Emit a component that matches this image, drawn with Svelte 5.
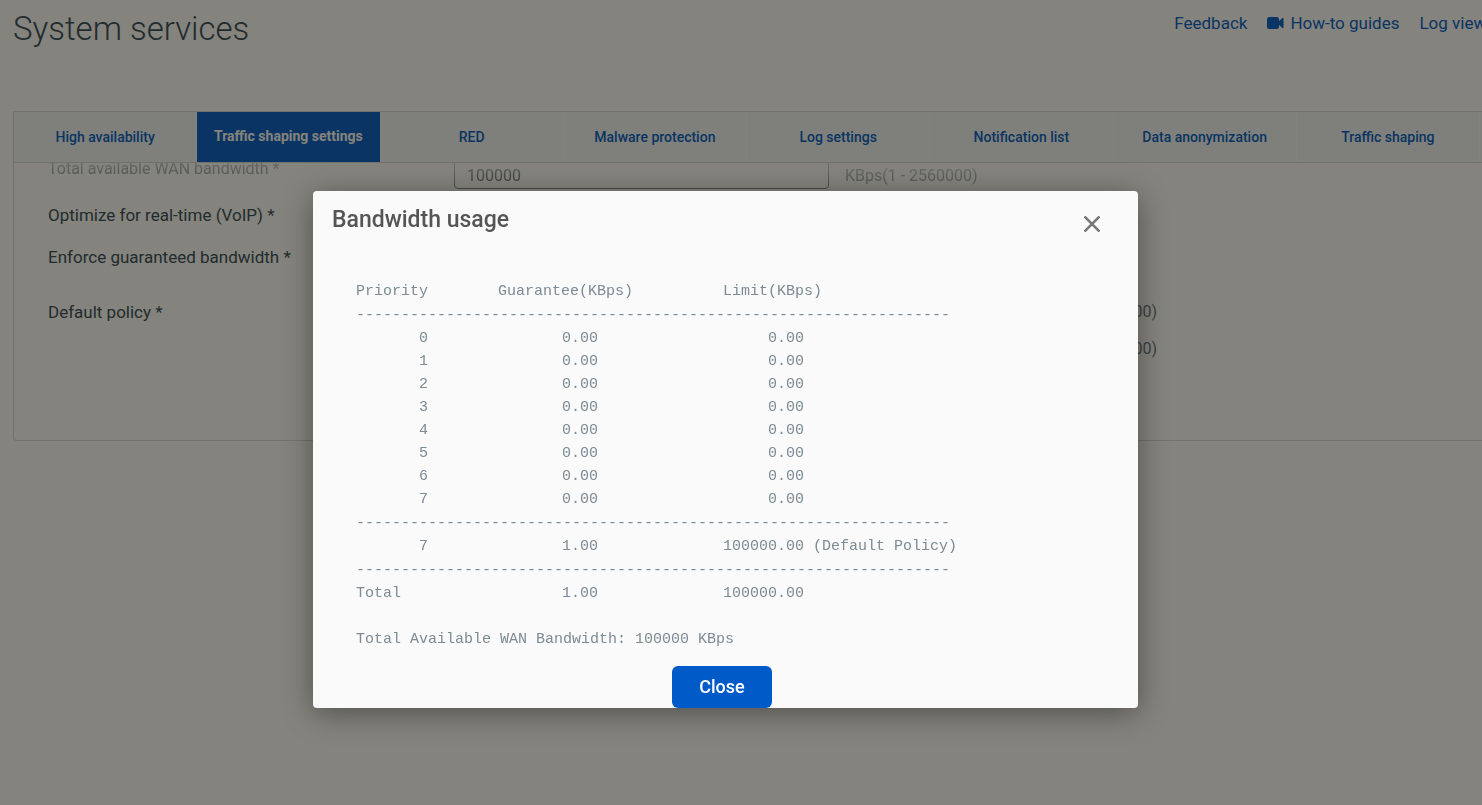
<script>
  const tabs = [
    'High availability',
    'Traffic shaping settings',
    'RED',
    'Malware protection',
    'Log settings',
    'Notification list',
    'Data anonymization',
    'Traffic shaping'
  ];
  let active = $state('Traffic shaping settings');
  let open = $state(true);
  let bandwidth = $state('100000');

  const rows = [0, 1, 2, 3, 4, 5, 6, 7].map((priority) => ({
    priority,
    guarantee: '0.00',
    limit: '0.00'
  }));
  const rule = '-'.repeat(66);
</script>

<div class="page">
  <header>
    <h1>System services</h1>
    <nav class="links">
      <a href="#feedback">Feedback</a>
      <a href="#guides">
        <svg width="17" height="12" viewBox="0 0 17 12" aria-hidden="true">
          <rect x="0" y="0" width="12" height="12" rx="2.5" fill="currentColor" />
          <path d="M11 5 15.400 1c.6-.5 1.100-.2 1.100.6v8.800c0 .8-.5 1.100-1.100.6L11 7z" fill="currentColor" />
        </svg>
        How-to guides
      </a>
      <a href="#logs">Log viewer</a>
    </nav>
  </header>

  <nav class="tabs">
    {#each tabs as tab}
      <button class:active={tab === active} onclick={() => (active = tab)}>{tab}</button>
    {/each}
  </nav>

  <main>
    <div class="row wan">
      <label for="wan">Total available WAN bandwidth *</label>
      <input id="wan" type="text" bind:value={bandwidth} />
      <span class="hint">KBps(1 - 2560000)</span>
    </div>
    <div class="row">
      <span>Optimize for real-time (VoIP) *</span>
    </div>
    <div class="row">
      <span>Enforce guaranteed bandwidth *</span>
    </div>
    <div class="row policy">
      <span>Default policy *</span>
      <div class="limits">
        <span class="hint">KBps(1 - 2560000)</span>
        <span class="hint">KBps(1 - 2560000)</span>
      </div>
    </div>
  </main>
</div>

{#if open}
  <div class="backdrop">
    <div class="modal" role="dialog" aria-modal="true" aria-labelledby="usage-title">
      <div class="modal-head">
        <h2 id="usage-title">Bandwidth usage</h2>
        <button class="x" aria-label="Close dialog" onclick={() => (open = false)}>
          <svg width="16" height="16" viewBox="0 0 16 16" aria-hidden="true">
            <path d="M.5.5 15.500 15.500M15.500.5.5 15.500" stroke="#777" stroke-width="2.600" fill="none" />
          </svg>
        </button>
      </div>
      <table>
        <thead>
          <tr>
            <th class="priority">Priority</th>
            <th class="guarantee-head">Guarantee(KBps)</th>
            <th class="limit">Limit(KBps)</th>
          </tr>
        </thead>
        <tbody>
          <tr class="rule"><td colspan="3">{rule}</td></tr>
          {#each rows as row}
            <tr>
              <td class="priority">{row.priority}</td>
              <td class="guarantee">{row.guarantee}</td>
              <td class="limit"><span>{row.limit}</span></td>
            </tr>
          {/each}
          <tr class="rule"><td colspan="3">{rule}</td></tr>
          <tr>
            <td class="priority">7</td>
            <td class="guarantee">1.00</td>
            <td class="limit"><span>100000.00</span> (Default Policy)</td>
          </tr>
          <tr class="rule"><td colspan="3">{rule}</td></tr>
          <tr>
            <td>Total</td>
            <td class="guarantee">1.00</td>
            <td class="limit"><span>100000.00</span></td>
          </tr>
        </tbody>
      </table>
      <p>Total Available WAN Bandwidth: 100000 KBps</p>
      <button class="close" onclick={() => (open = false)}>Close</button>
    </div>
  </div>
{/if}

<style>
  :global(body) {
    margin: 0;
    background: #fff;
    overflow: hidden;
  }
  .page {
    font-family: Roboto, 'Liberation Sans', sans-serif;
    font-size: 17px;
    line-height: 20px;
    color: #32495a;
    padding-left: 13px;
    overflow: hidden;
  }
  header {
    display: flex;
    justify-content: space-between;
    align-items: flex-start;
    height: 111px;
  }
  h1 {
    margin: 9px 0 0;
    font-size: 33px;
    line-height: 40px;
    font-weight: 300;
  }
  .links {
    display: flex;
    gap: 20px;
    margin: 13px -19px 0 0;
    white-space: nowrap;
  }
  a {
    color: #005bc8;
    text-decoration: none;
    display: flex;
    align-items: center;
    gap: 6px;
  }
  button {
    font-family: inherit;
    border: 0;
    cursor: pointer;
  }
  .tabs {
    display: grid;
    grid-template-columns: repeat(8, 1fr);
    height: 50px;
    padding-right: 2px;
    border: 1px solid #dadcdc;
    border-right: 0;
    background: #f5f9fa;
  }
  .tabs button {
    padding: 0;
    background: none;
    border-right: 1px solid #fcfcfc;
    color: #005bc8;
    font-size: 14px;
    font-weight: 500;
    white-space: nowrap;
  }
  .tabs button.active {
    padding-bottom: 2px;
    background: #005bc8;
    background-clip: padding-box;
    color: #fff;
    font-weight: 700;
  }
  main {
    height: 277px;
    overflow: hidden;
    border: 1px solid #dadcdc;
    border-width: 0 0 1px 1px;
    border-radius: 0 0 0 4px;
    background: #fff;
  }
  .row {
    display: grid;
    grid-template-columns: 406px 375px 1fr;
    padding-left: 34px;
    margin-bottom: 22px;
  }
  .wan {
    height: 38px;
    margin-top: -12px;
    margin-bottom: 16px;
    font-size: 16px;
    mask-image: linear-gradient(rgba(0, 0, 0, 0.3) 12px, rgba(0, 0, 0, 0.75) 38px);
  }
  .wan label {
    padding-top: 8px;
  }
  .wan input {
    box-sizing: border-box;
    height: 38px;
    padding: 10px 12px 0;
    border: 1px solid #52636f;
    border-radius: 4px;
    background: none;
    color: #102030;
    font: inherit;
  }
  .hint {
    color: #6a7884;
    font-size: 16px;
  }
  .wan .hint {
    padding: 15px 0 0 16px;
  }
  .policy {
    grid-template-columns: 406px 703px;
    margin-top: 35px;
  }
  .limits {
    display: grid;
    gap: 17px;
    text-align: right;
  }
  .backdrop {
    position: fixed;
    inset: 0;
    display: flex;
    justify-content: center;
    align-items: flex-start;
    padding: 191px 31px 0 0;
    background: rgba(20, 17, 5, 0.52);
    font-family: Roboto, 'Liberation Sans', sans-serif;
  }
  .modal {
    display: flex;
    flex-direction: column;
    width: 825px;
    border-radius: 4px;
    background: #fafafa;
    box-shadow: 0 5px 30px rgba(0, 0, 0, 0.4);
  }
  .modal-head {
    display: flex;
    justify-content: space-between;
    align-items: flex-start;
    padding: 16px 38px 0 19px;
    height: 73px;
  }
  h2 {
    margin: 0;
    font-size: 23px;
    line-height: 26px;
    font-weight: 500;
    color: #555;
  }
  .x {
    display: flex;
    margin-top: 9px;
    padding: 0;
    background: none;
  }
  table,
  p {
    margin: 0 0 0 43px;
    font-family: 'Liberation Mono', monospace;
    font-size: 15px;
    line-height: 23px;
    color: #7d8b94;
  }
  table {
    border-collapse: collapse;
    width: 660px;
    table-layout: auto;
  }
  th {
    font-weight: 400;
  }
  th,
  td {
    padding: 0;
    text-align: left;
    white-space: nowrap;
  }
  .rule td {
    height: 24px;
  }
  .priority {
    width: 72px;
    text-align: right;
  }
  .guarantee-head,
  .guarantee {
    width: 205px;
    box-sizing: border-box;
    text-align: right;
  }
  .guarantee {
    padding-right: 35px;
  }
  .limit {
    padding-left: 90px;
  }
  .limit span {
    display: inline-block;
    width: 81px;
    text-align: right;
  }
  p {
    margin-top: 23px;
  }
  .close {
    align-self: center;
    width: 100px;
    height: 42px;
    margin: 15px 7px 0 0;
    padding: 0 0 2px;
    border-radius: 6px;
    background: #005bc8;
    color: #fff;
    font-size: 18px;
    font-weight: 500;
  }
</style>
